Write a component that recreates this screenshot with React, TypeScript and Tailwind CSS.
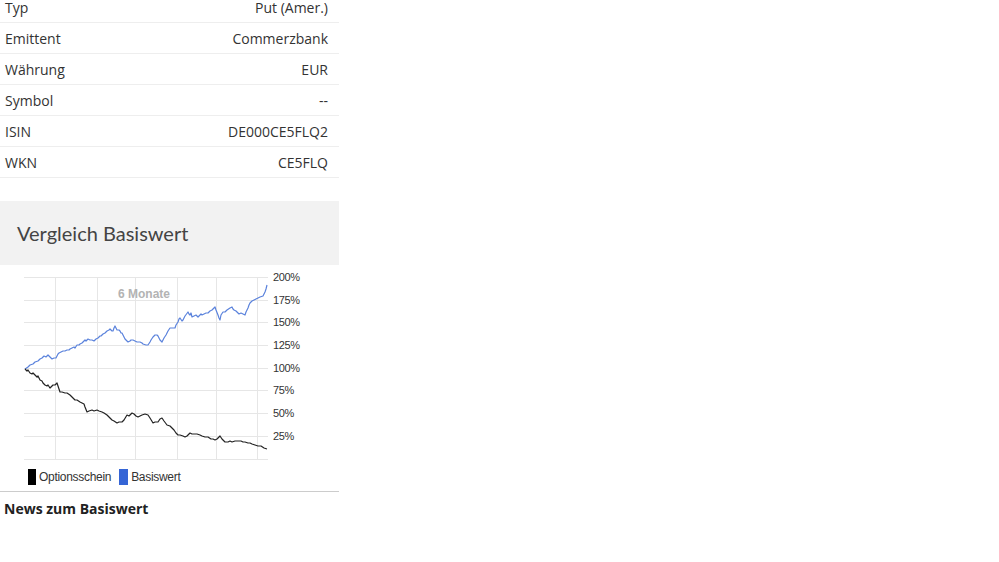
const rows = [
  { label: "Typ", value: "Put (Amer.)" },
  { label: "Emittent", value: "Commerzbank" },
  { label: "Währung", value: "EUR" },
  { label: "Symbol", value: "--" },
  { label: "ISIN", value: "DE000CE5FLQ2" },
  { label: "WKN", value: "CE5FLQ" },
];

// page coordinates, the svg viewBox starts at y=265
const basis: [number, number][] = [
  [25, 369], [28, 367], [30, 365], [33, 364], [35, 362], [38, 361], [40, 359], [42, 358], [44, 356],
  [46, 357], [48, 355], [50, 357], [52, 359], [54, 358], [56, 358], [58, 354], [59, 353], [61, 352],
  [63, 351], [65, 351], [67, 350], [69, 350], [70, 349], [72, 348], [74, 347], [75, 348], [77, 345],
  [79, 345], [80, 344], [82, 343], [85, 340], [86, 341], [88, 339], [90, 340], [92, 340], [94, 341],
  [96, 339], [98, 338], [100, 336], [101, 336], [103, 334], [105, 333], [107, 331], [109, 330],
  [110, 329], [112, 331], [113, 331], [114, 328], [115, 326], [116, 328], [117, 330], [119, 330],
  [120, 331], [121, 333], [122, 333], [124, 337], [125, 339], [127, 341], [128, 342], [130, 341],
  [131, 340], [133, 340], [135, 341], [137, 342], [140, 342], [142, 343], [143, 344], [146, 345],
  [148, 345], [150, 342], [151, 340], [153, 337], [155, 335], [157, 335], [158, 336], [160, 340],
  [162, 342], [164, 338], [166, 335], [168, 331], [170, 328], [172, 328], [175, 328], [176, 325],
  [178, 322], [179, 319], [180, 318], [182, 321], [183, 320], [185, 316], [188, 312], [189, 314],
  [190, 315], [191, 313], [192, 317], [194, 316], [196, 315], [198, 317], [199, 316], [201, 314],
  [202, 315], [204, 314], [206, 313], [208, 313], [210, 311], [212, 310], [215, 307], [216, 310],
  [218, 315], [219, 318], [220, 320], [221, 315], [223, 312], [225, 312], [227, 310], [230, 308],
  [232, 307], [233, 309], [234, 310], [236, 311], [237, 312], [239, 314], [241, 313], [243, 314],
  [245, 315], [246, 312], [248, 308], [249, 305], [250, 303], [252, 301], [254, 300], [256, 299],
  [258, 298], [260, 297], [263, 296], [264, 294], [265, 292], [266, 289], [267, 285],
];

const option: [number, number][] = [
  [25, 369], [27, 371], [28, 370], [30, 373], [32, 374], [33, 373], [35, 375], [37, 377], [38, 376],
  [40, 380], [42, 381], [43, 383], [45, 385], [47, 386], [48, 385], [50, 388], [51, 387], [53, 385],
  [55, 385], [57, 383], [58, 386], [60, 392], [62, 392], [65, 393], [67, 393], [70, 395], [72, 397],
  [73, 398], [75, 400], [77, 400], [80, 402], [82, 403], [84, 404], [85, 407], [87, 412], [89, 411],
  [92, 410], [94, 411], [97, 410], [99, 411], [102, 412], [104, 413], [107, 415], [109, 417],
  [112, 420], [114, 421], [117, 423], [119, 422], [122, 422], [124, 420], [127, 415], [129, 416],
  [132, 413], [134, 414], [136, 416], [138, 417], [140, 416], [142, 415], [145, 414], [148, 415],
  [150, 418], [153, 423], [155, 422], [158, 422], [160, 419], [162, 418], [164, 421], [167, 425],
  [170, 426], [172, 428], [174, 430], [176, 433], [178, 435], [180, 435], [183, 436], [185, 437],
  [187, 436], [190, 433], [192, 434], [194, 434], [197, 434], [200, 435], [202, 436], [205, 437],
  [208, 437], [211, 439], [213, 439], [215, 440], [217, 439], [219, 437], [220, 436], [222, 439],
  [225, 442], [228, 442], [230, 441], [232, 442], [235, 441], [238, 441], [241, 441], [243, 442],
  [245, 442], [248, 443], [250, 443], [252, 444], [255, 445], [258, 446], [261, 446], [264, 448],
  [267, 449],
];

const toPoints = (pts: [number, number][]) => pts.map(([x, y]) => `${x},${y}`).join(" ");

const yTicks = [
  { y: 277, label: "200%" },
  { y: 300, label: "175%" },
  { y: 322, label: "150%" },
  { y: 345, label: "125%" },
  { y: 368, label: "100%" },
  { y: 390, label: "75%" },
  { y: 413, label: "50%" },
  { y: 436, label: "25%" },
  { y: 459, label: "" },
];

const xGrid = [55, 97, 135, 177, 216, 257];

function Chart() {
  return (
    <svg width="339" height="202" viewBox="0 265 339 202" className="block">
      {yTicks.map((t) => (
        <line key={t.y} x1="24" x2="268" y1={t.y + 0.5} y2={t.y + 0.5} stroke="#e6e6e6" strokeWidth="1" />
      ))}
      {xGrid.map((x) => (
        <line key={x} x1={x + 0.5} x2={x + 0.5} y1="277" y2="459" stroke="#e6e6e6" strokeWidth="1" />
      ))}
      {yTicks.map((t) =>
        t.label ? (
          <text
            key={t.label}
            x="273"
            y={t.y + 4}
            fontSize="11"
            fill="#333"
            fontFamily="'Liberation Sans', Arial, sans-serif"
            letterSpacing="-0.4"
          >
            {t.label}
          </text>
        ) : null
      )}
      <text
        x="118"
        y="298"
        fontSize="12"
        fontWeight="bold"
        fill="#b3b3b3"
        fontFamily="'Liberation Sans', Arial, sans-serif"
      >
        6 Monate
      </text>
      <polyline points={toPoints(basis)} fill="none" stroke="#5a82dc" strokeWidth="1.2" strokeLinejoin="round" />
      <polyline points={toPoints(option)} fill="none" stroke="#222" strokeWidth="1.2" strokeLinejoin="round" />
    </svg>
  );
}

export default function App() {
  return (
    <div className="w-[339px] bg-white font-['Open_Sans',sans-serif] text-[#333]">
      <div className="-mt-[8px]">
        {rows.map((r) => (
          <div
            key={r.label}
            className="flex h-[31px] items-center justify-between border-b border-[#eeeeee] pl-[5px] pr-[11px] text-[14px]"
          >
            <span>{r.label}</span>
            <span>{r.value}</span>
          </div>
        ))}
      </div>

      <div className="mt-[23px] flex h-[64px] items-center bg-[#f2f2f2] pl-[17px]">
        <h2 className="font-['Lato',sans-serif] text-[20px] font-normal text-[#444]">Vergleich Basiswert</h2>
      </div>

      <Chart />

      <div className="flex h-[24px] items-center pb-[4px] pl-[28px] font-['Liberation_Sans',Arial,sans-serif] text-[12px] tracking-[-0.3px] text-[#333]">
        <span className="h-[16px] w-[8px] bg-black" />
        <span className="ml-[3px]">Optionsschein</span>
        <span className="ml-[8px] h-[16px] w-[9px] bg-[#3565d6]" />
        <span className="ml-[3px]">Basiswert</span>
      </div>

      <div className="border-t border-[#cccccc] pl-[4px] pt-[6px]">
        <h3 className="text-[14px] font-bold text-[#222]">News zum Basiswert</h3>
      </div>
    </div>
  );
}
